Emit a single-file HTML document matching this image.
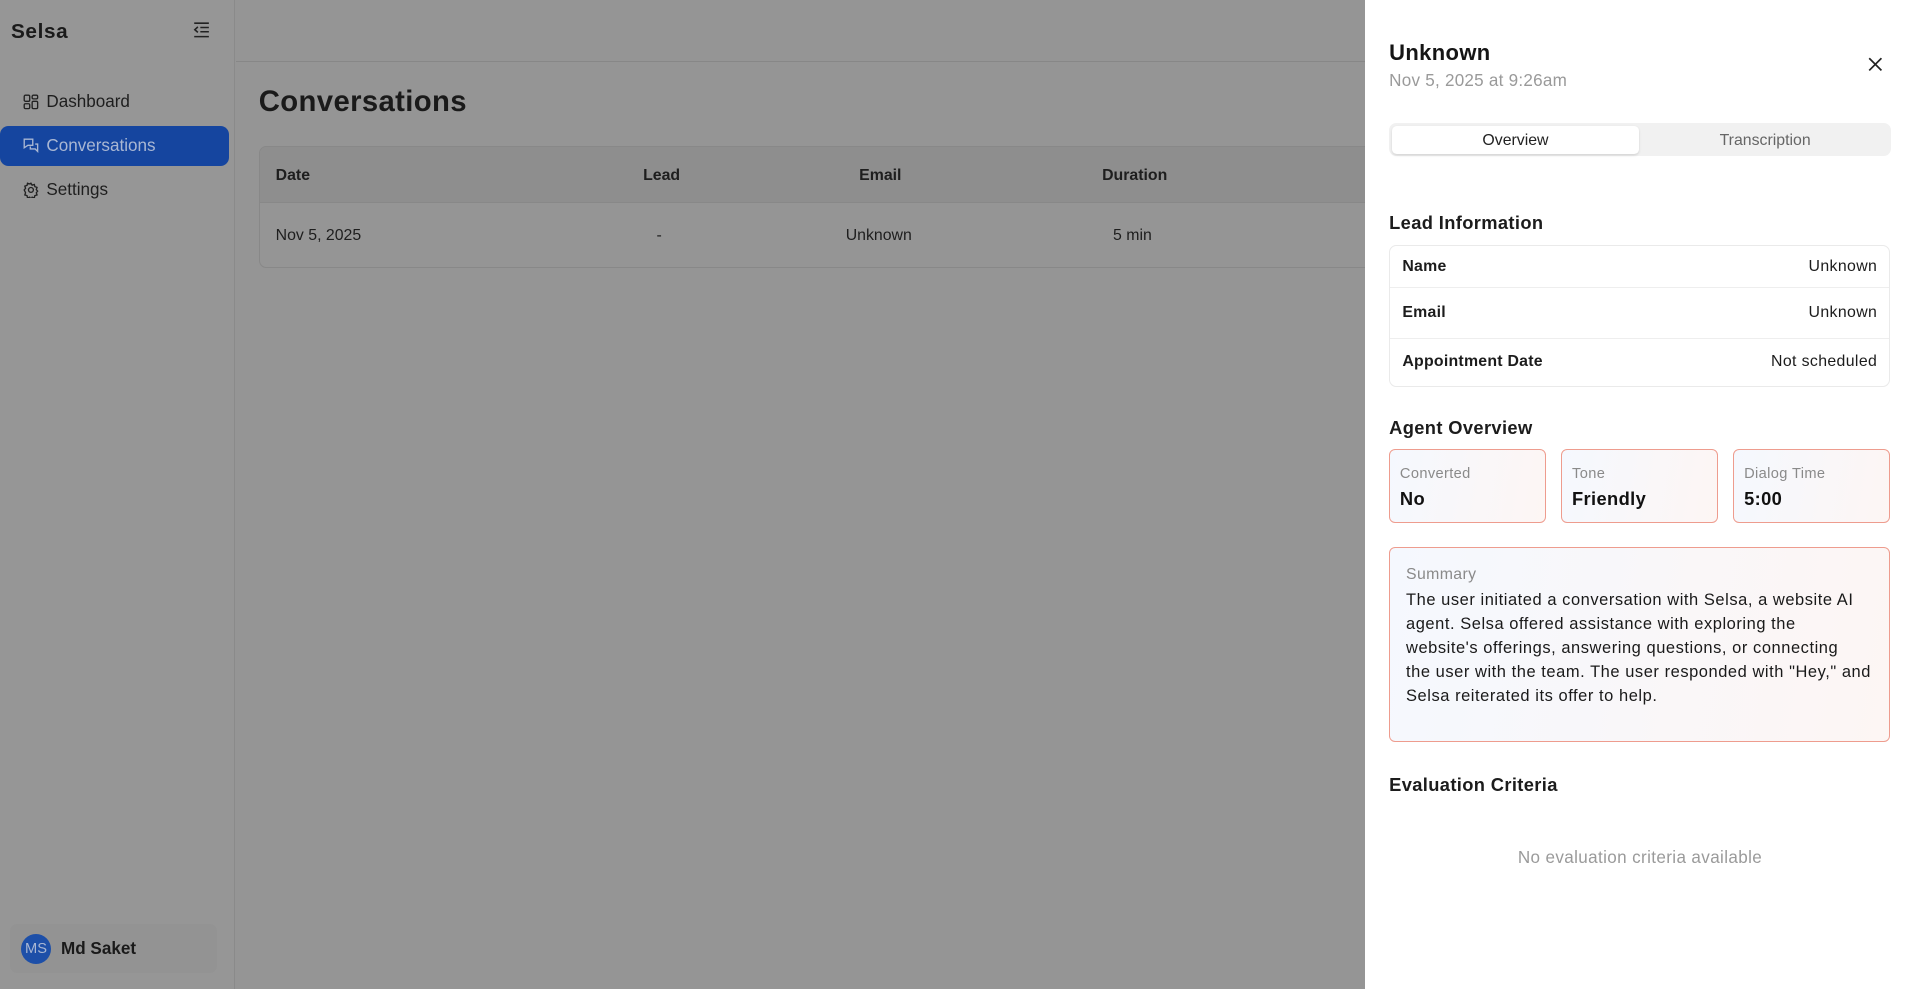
<!DOCTYPE html>
<html><head><meta charset="utf-8"><style>
html,body{margin:0;padding:0;overflow:hidden;width:1914px;height:989px;background:#959595}
#root{zoom:1.2207;width:1568px;height:810px;position:relative;font-family:"Liberation Sans",sans-serif;color:#1c1c1c}
.abs{position:absolute}
.side{left:0;top:0;width:192px;height:810px;border-right:1px solid #8a8a8a;background:#969696}
.nav{position:absolute;left:0;width:188px;height:33px;display:flex;align-items:center;font-size:14px;color:#1e1e1e}
.nav svg{margin-left:19px;margin-right:6px}
.panel{left:1118px;top:0;width:450px;height:810px;background:#fff}
.lbl{font-weight:bold;letter-spacing:.2px}
.row{display:flex;justify-content:space-between;align-items:center;height:41px;padding:0 10px;font-size:13px;border-bottom:1px solid #eee;letter-spacing:.3px}
.card{position:absolute;top:368px;width:127px;height:59px;border:1px solid #ee9c8e;border-radius:5px;background:linear-gradient(100deg,#f5f8fe,#fdf6f4)}
.card .t{position:absolute;left:8px;top:13px;font-size:12px;color:#8a8a8a;letter-spacing:.3px}
.card .v{position:absolute;left:8px;top:31px;font-size:15px;font-weight:bold;color:#111;letter-spacing:.3px}
</style></head><body><div id="root">
<div class="abs side">
  <div class="abs" style="left:9px;top:16px;font-size:17px;font-weight:bold;color:#1a1a1a;letter-spacing:.5px">Selsa</div>
  <svg class="abs" style="left:158px;top:18px" width="14" height="13" viewBox="0 0 14 13" fill="none" stroke="#222" stroke-width="1.3"><path d="M1 1h12M6 4.5h7M6 8h7M1 12h12M4 4L1.5 6.3 4 8.5"/></svg>
  <div class="nav" style="top:67px"><svg width="13" height="13" viewBox="0 0 13 13" fill="none" stroke="#222" stroke-width="1.1"><rect x="1" y="1" width="4.5" height="5" rx="1"/><rect x="7.5" y="1" width="4.5" height="3" rx="1"/><rect x="1" y="8" width="4.5" height="4" rx="1"/><rect x="7.5" y="6" width="4.5" height="6" rx="1"/></svg>Dashboard</div>
  <div class="nav" style="top:103px;background:#15459f;border-radius:7px;color:#a9b7d3"><svg width="13" height="13" viewBox="0 0 13 13" fill="none" stroke="#a9b7d3" stroke-width="1.1"><path d="M1 1h7v5H4L1 8zM10 5h2v6l-2-2H6V7"/></svg>Conversations</div>
  <div class="nav" style="top:139px"><svg width="13" height="13" viewBox="0 0 13 13" fill="none" stroke="#222" stroke-width="1.1"><circle cx="6.5" cy="6.5" r="2"/><path d="M6.5 1l1 1.6 1.8-.6.4 1.8 1.8.6-.6 1.8 1.1 1.3-1.1 1.3.6 1.8-1.8.6-.4 1.8-1.8-.6-1 1.6-1-1.6-1.8.6-.4-1.8-1.8-.6.6-1.8L1 6.5l1.1-1.3-.6-1.8 1.8-.6.4-1.8 1.8.6z"/></svg>Settings</div>
  <div class="abs" style="left:8px;top:757px;width:170px;height:40px;border-radius:6px;background:#939393"></div>
  <div class="abs" style="left:17px;top:765px;width:25px;height:25px;border-radius:50%;background:#1d4fa8;color:#a9b7d3;font-size:12px;line-height:25px;text-align:center">MS</div>
  <div class="abs" style="left:50px;top:769px;font-size:14px;font-weight:bold;color:#1a1a1a">Md Saket</div>
</div>
<div class="abs" style="left:193px;top:50px;width:930px;border-top:1px solid #878787"></div>
<div class="abs" style="left:212px;top:70px;font-size:24px;font-weight:bold;color:#1a1a1a;letter-spacing:.3px">Conversations</div>
<div class="abs" style="left:212px;top:120px;width:920px;height:98px;border:1px solid #888;border-radius:6px;overflow:hidden;font-size:13px;color:#1e1e1e">
  <div style="height:45px;background:#8e8e8e;border-bottom:1px solid #888;position:relative;font-weight:bold">
    <span class="abs" style="left:13px;top:16px">Date</span><span class="abs" style="left:314px;top:16px">Lead</span><span class="abs" style="left:491px;top:16px">Email</span><span class="abs" style="left:690px;top:16px">Duration</span>
  </div>
  <div style="position:relative"><span class="abs" style="left:13px;top:19px">Nov 5, 2025</span><span class="abs" style="left:325px;top:19px">-</span><span class="abs" style="left:480px;top:19px">Unknown</span><span class="abs" style="left:699px;top:19px">5 min</span></div>
</div>
<div class="abs panel">
  <div class="abs" style="left:20px;top:33px;font-size:18px;font-weight:bold;color:#151515;letter-spacing:.3px">Unknown</div>
  <div class="abs" style="left:20px;top:58px;font-size:14px;color:#9a9a9a;letter-spacing:.2px">Nov 5, 2025 at 9:26am</div>
  <svg class="abs" style="left:412px;top:47px" width="12" height="12" viewBox="0 0 12 12" stroke="#222" stroke-width="1.4"><path d="M1 1l10 10M11 1L1 11"/></svg>
  <div class="abs" style="left:20px;top:101px;width:411px;height:27px;background:#f1f1f1;border-radius:6px"></div>
  <div class="abs" style="left:22px;top:103px;width:203px;height:23px;background:#fff;border-radius:4px;box-shadow:0 1px 2px rgba(0,0,0,.12);text-align:center;line-height:24px;font-size:13px;color:#222">Overview</div>
  <div class="abs" style="left:227px;top:103px;width:202px;height:23px;text-align:center;line-height:24px;font-size:13px;color:#666">Transcription</div>
  <div class="abs" style="left:20px;top:174px;font-size:15px;font-weight:bold;letter-spacing:.3px">Lead Information</div>
  <div class="abs" style="left:20px;top:201px;width:409px;border:1px solid #eaeaea;border-radius:6px;overflow:hidden">
    <div class="row" style="height:33px"><span class="lbl">Name</span><span>Unknown</span></div>
    <div class="row"><span class="lbl">Email</span><span>Unknown</span></div>
    <div class="row" style="border:0;height:39px"><span class="lbl">Appointment Date</span><span>Not scheduled</span></div>
  </div>
  <div class="abs" style="left:20px;top:342px;font-size:15px;font-weight:bold;letter-spacing:.3px">Agent Overview</div>
  <div class="card" style="left:20px"><div class="t">Converted</div><div class="v">No</div></div>
  <div class="card" style="left:161px"><div class="t">Tone</div><div class="v">Friendly</div></div>
  <div class="card" style="left:302px"><div class="t">Dialog Time</div><div class="v">5:00</div></div>
  <div class="abs" style="left:20px;top:448px;width:383px;height:135px;padding:15px 13px 8px;border:1px solid #ee9c8e;border-radius:5px;background:linear-gradient(100deg,#f5f8fe,#fdf6f4)">
    <div style="font-size:13px;color:#8a8a8a;margin-bottom:3px;letter-spacing:.3px">Summary</div>
    <div style="font-size:13.5px;line-height:19.7px;color:#1a1a1a;letter-spacing:.45px;white-space:nowrap">The user initiated a conversation with Selsa, a website AI<br>agent. Selsa offered assistance with exploring the<br>website's offerings, answering questions, or connecting<br>the user with the team. The user responded with "Hey," and<br>Selsa reiterated its offer to help.</div>
  </div>
  <div class="abs" style="left:20px;top:634px;font-size:15px;font-weight:bold;letter-spacing:.3px">Evaluation Criteria</div>
  <div class="abs" style="left:20px;top:695px;width:411px;text-align:center;font-size:14px;color:#9a9a9a;letter-spacing:.3px">No evaluation criteria available</div>
</div>
</div></body></html>
